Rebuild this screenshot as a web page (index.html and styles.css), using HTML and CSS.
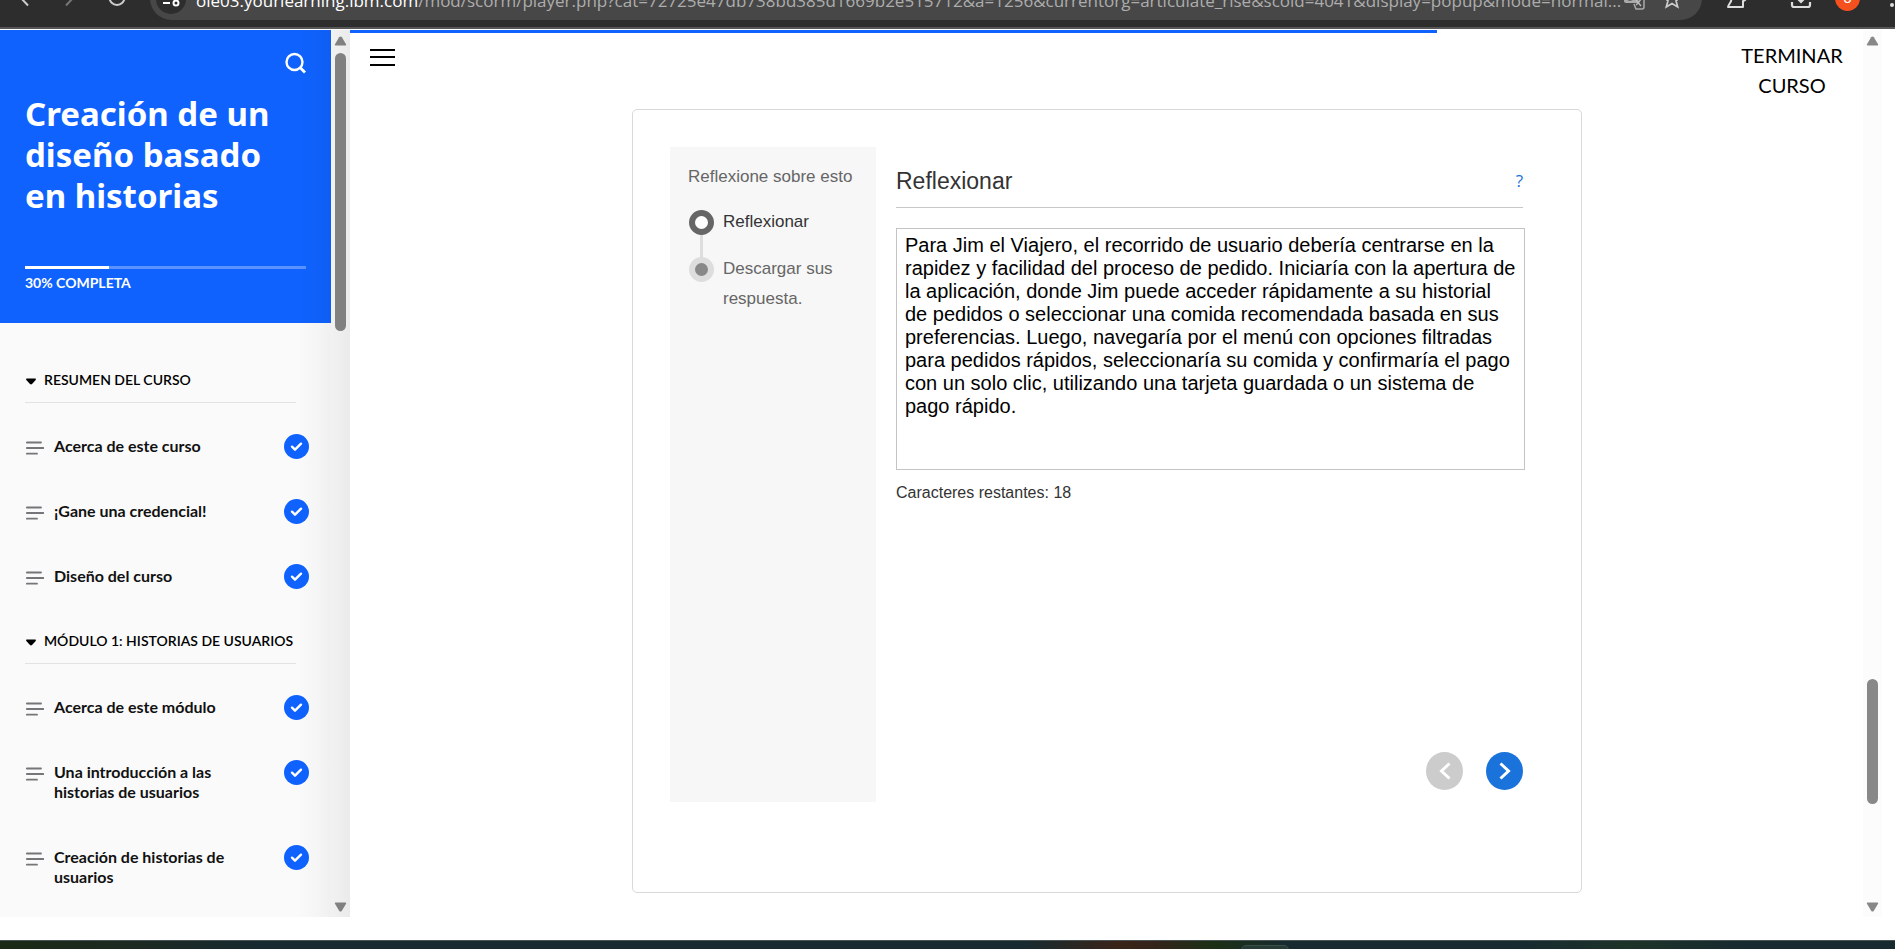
FILE: index.html
```html
<!DOCTYPE html>
<html lang="es">
<head>
<meta charset="utf-8">
<meta name="viewport" content="width=device-width, initial-scale=1">
<title>Creación de un diseño basado en historias</title>
<link rel="stylesheet" href="styles.css">
</head>
<body>
<svg class="sprite" aria-hidden="true">
  <symbol id="check" viewBox="0 0 25 25"><circle cx="12.500" cy="12.500" r="12.500" fill="#0f62fe"/><path d="M8 12.700l3 3 6-6" fill="none" stroke="#fff" stroke-width="2.400" stroke-linecap="round" stroke-linejoin="round"/></symbol>
  <symbol id="lines" viewBox="0 0 18 16"><path d="M.8 2.500H15M.8 8H17.300M.8 13.700H11" fill="none" stroke="#75757a" stroke-width="1.800" stroke-linecap="round"/></symbol>
  <symbol id="up" viewBox="0 0 13 11"><path d="M1 10.500h11q1-.3.6-1.500L8 1.500q-1.500-2-3 0L.4 9q-.4 1.200.6 1.500z" fill="#888"/></symbol>
  <symbol id="caret" viewBox="0 0 10 7"><path d="M.6.500h8.800q.8.500.3 1.500L6 6q-1 .9-2 0L.3 2Q-.2 1 .6.500z" fill="#000"/></symbol>
</svg>

<header class="toolbar">
  <nav class="toolbar-nav" aria-label="Navegación">
    <button type="button" aria-label="Atrás"><svg viewBox="0 0 24 22"><path d="M16 15.500L8 7l8-8" stroke="#ccc"/></svg></button>
    <button type="button" aria-label="Adelante"><svg viewBox="0 0 24 22"><path d="M8 15.500L16 7 8-1" stroke="#777"/></svg></button>
    <button type="button" aria-label="Recargar"><svg viewBox="0 0 24 22"><circle cx="13" cy="7.500" r="7.500" stroke="#ccc"/></svg></button>
  </nav>
  <div class="omnibox">
    <button type="button" class="site-info" aria-label="Información del sitio"><svg viewBox="0 0 18 18"><path d="M1 13h7M10 6h7" stroke="#fff" stroke-width="2"/><circle cx="14" cy="13" r="2.500" fill="none" stroke="#fff" stroke-width="2"/></svg></button>
    <span class="url"><b>ole03.yourlearning.ibm.com</b>/mod/scorm/player.php?cat=72725e47db738bd385d1669b2e515712&amp;a=1256&amp;currentorg=articulate_rise&amp;scoid=4041&amp;display=popup&amp;mode=normal...</span>
    <button type="button" class="omni-icon" aria-label="Traducir"><svg viewBox="0 0 22 22"><path d="M1 1h12l3 14H3q-2 0-2-2z" fill="#aaa"/><circle cx="7" cy="9" r="3" fill="none" stroke="#474747" stroke-width="1.500"/><path d="M14 6h5q2 0 2 2v11q0 2-2 2h-6l-2-5" fill="none" stroke="#aaa" stroke-width="1.500"/><path d="M12 10h7m-1 0q-1 4-5 7m0-5l5 6" fill="none" stroke="#bbb" stroke-width="1.400"/></svg></button>
    <button type="button" class="omni-icon" aria-label="Añadir a favoritos"><svg viewBox="0 0 22 22"><path d="M11 2l2.600 6 6.400.6-5 4.200 1.700 6.200L11 15.500 5.300 19 7 12.800 2 8.600 8.400 8z" fill="none" stroke="#ccc" stroke-width="1.700"/></svg></button>
  </div>
  <div class="toolbar-actions">
    <button type="button" aria-label="Extensiones"><svg viewBox="0 0 22 22"><path d="M5 0H3v5q4 2 1 6-2 3-2 4h15v-6q4-1 3-5h-3V0" fill="none" stroke="#ddd" stroke-width="2" stroke-linejoin="round"/></svg></button>
    <span class="divider"></span>
    <button type="button" aria-label="Descargas"><svg viewBox="0 0 22 22"><path d="M2 10v3q0 2 2 2h14q2 0 2-2v-3" fill="none" stroke="#ddd" stroke-width="2.200"/><path d="M11 0v9M6 5l5 5 5-5" fill="none" stroke="#ddd" stroke-width="2"/></svg></button>
    <button type="button" class="avatar" aria-label="Perfil">o</button>
    <button type="button" class="more" aria-label="Más"><svg viewBox="0 0 6 22"><circle cx="3" cy="13" r="2" fill="#ddd"/><circle cx="3" cy="6" r="2" fill="#ddd"/></svg></button>
  </div>
</header>

<div class="page">
  <aside class="sidebar">
    <div class="sidebar-body">
      <div class="course-head">
        <button type="button" class="search" aria-label="Buscar"><svg viewBox="0 0 22 22"><circle cx="10.500" cy="10" r="8" fill="none" stroke="#fff" stroke-width="2.400"/><path d="M16 15.500l5 5" stroke="#fff" stroke-width="2.800"/></svg></button>
        <h1>Creación de un diseño basado en historias</h1>
        <div class="course-progress"><span style="width:30%"></span></div>
        <p>30% COMPLETA</p>
      </div>
      <nav class="lessons" aria-label="Lecciones">
        <section>
          <h2><button type="button"><svg class="caret"><use href="#caret"/></svg>RESUMEN DEL CURSO</button></h2>
          <ul>
            <li><a href="#"><svg class="lines"><use href="#lines"/></svg><span>Acerca de este curso</span><svg class="check"><use href="#check"/></svg></a></li>
            <li><a href="#"><svg class="lines"><use href="#lines"/></svg><span>¡Gane una credencial!</span><svg class="check"><use href="#check"/></svg></a></li>
            <li><a href="#"><svg class="lines"><use href="#lines"/></svg><span>Diseño del curso</span><svg class="check"><use href="#check"/></svg></a></li>
          </ul>
        </section>
        <section>
          <h2><button type="button"><svg class="caret"><use href="#caret"/></svg>MÓDULO 1: HISTORIAS DE USUARIOS</button></h2>
          <ul>
            <li><a href="#"><svg class="lines"><use href="#lines"/></svg><span>Acerca de este módulo</span><svg class="check"><use href="#check"/></svg></a></li>
            <li><a href="#"><svg class="lines"><use href="#lines"/></svg><span>Una introducción a las historias de usuarios</span><svg class="check"><use href="#check"/></svg></a></li>
            <li><a href="#"><svg class="lines"><use href="#lines"/></svg><span>Creación de historias de usuarios</span><svg class="check"><use href="#check"/></svg></a></li>
          </ul>
        </section>
      </nav>
    </div>
    <div class="scrollbar side-scroll" aria-hidden="true">
      <svg><use href="#up"/></svg>
      <div class="track"><i class="thumb"></i></div>
      <svg class="down"><use href="#up"/></svg>
    </div>
  </aside>

  <main class="content">
    <div class="lesson-progress"><span style="width:71.850%"></span></div>
    <header class="lesson-head">
      <button type="button" class="menu" aria-label="Menú"><i></i><i></i><i></i></button>
      <button type="button" class="finish">TERMINAR CURSO</button>
    </header>
    <div class="stage">
      <article class="card">
        <aside class="steps">
          <h2>Reflexione sobre esto</h2>
          <ol>
            <li class="current"><i class="dot"></i><span>Reflexionar</span></li>
            <li><i class="dot"></i><span>Descargar sus respuesta.</span></li>
          </ol>
        </aside>
        <section class="reflection">
          <header><h3><label for="answer">Reflexionar</label></h3><a href="#">?</a></header>
          <textarea id="answer" spellcheck="false">Para Jim el Viajero, el recorrido de usuario debería centrarse en la rapidez y facilidad del proceso de pedido. Iniciaría con la apertura de la aplicación, donde Jim puede acceder rápidamente a su historial de pedidos o seleccionar una comida recomendada basada en sus preferencias. Luego, navegaría por el menú con opciones filtradas para pedidos rápidos, seleccionaría su comida y confirmaría el pago con un solo clic, utilizando una tarjeta guardada o un sistema de pago rápido.</textarea>
          <p>Caracteres restantes: 18</p>
          <footer>
            <button type="button" class="prev" aria-label="Anterior"><svg viewBox="0 0 12 18"><path d="M10.500 1.500L2.500 9l8 7.500"/></svg></button>
            <button type="button" class="next" aria-label="Siguiente"><svg viewBox="0 0 12 18"><path d="M1.500 1.500L9.500 9l-8 7.500"/></svg></button>
          </footer>
        </section>
      </article>
    </div>
  </main>
  <div class="scrollbar page-scroll" aria-hidden="true">
    <svg><use href="#up"/></svg>
    <div class="track"><i class="thumb"></i></div>
    <svg class="down"><use href="#up"/></svg>
  </div>
</div>

<footer class="taskbar"><span></span></footer>
</body>
</html>
```
FILE: styles.css
```css
* { box-sizing: border-box; }

body {
  display: flex;
  flex-direction: column;
  height: 100vh;
  margin: 0;
  overflow: hidden;
  background: #fff;
  color: #000;
  font-family: Lato, sans-serif;
}

h1, h2, h3, p, ul, ol { margin: 0; padding: 0; list-style: none; }
button { padding: 0; border: 0; background: none; color: inherit; font: inherit; cursor: pointer; }
a { color: inherit; text-decoration: none; }
svg { display: block; }
.sprite { position: absolute; width: 0; height: 0; }

/* Browser toolbar */
.toolbar {
  display: flex;
  flex: none;
  height: 29px;
  overflow: hidden;
  border-bottom: 2px solid #575757;
  background: #2d2d2d;
}
.toolbar-nav { display: flex; flex: none; align-items: flex-start; gap: 22px; width: 150px; padding-left: 12px; margin-top: -10px; }
.toolbar-nav svg { width: 24px; height: 22px; fill: none; stroke-width: 2; }
.omnibox {
  display: flex;
  flex: 1;
  align-items: center;
  gap: 16px;
  min-width: 0;
  height: 43px;
  margin-top: -23px;
  padding: 0 19px 0 6px;
  border-radius: 22px;
  background: #474747;
}
.site-info { display: grid; flex: none; place-items: center; width: 30px; height: 30px; border-radius: 50%; background: #2d2d2d; }
.site-info svg { width: 18px; height: 18px; }
.url { flex: 1; min-width: 0; margin: 4px 0 0 -6px; color: #adadad; font: 17px/24px "Open Sans", sans-serif; white-space: nowrap; }
.url b { color: #fff; font-weight: 400; }
.omni-icon { flex: none; }
.omni-icon svg { width: 22px; height: 22px; }
.toolbar-actions { display: flex; flex: none; align-items: flex-start; gap: 23px; width: 193px; margin-top: -8px; padding-left: 24px; }
.toolbar-actions svg { width: 22px; height: 22px; }
.toolbar-actions .divider { width: 3px; height: 17px; margin-left: -4px; background: #111; }
.toolbar-actions .avatar { flex: none; width: 25px; height: 25px; margin-top: -6px; border-radius: 50%; background: #f4511e; color: #fff; font: 15px/25px Roboto, sans-serif; }
.toolbar-actions .more { flex: none; margin-left: 6px; }
.toolbar-actions .more svg { width: 6px; }

/* Page frame */
.page { display: flex; flex: 1; min-height: 0; padding: 1px 13px 23px 0; }

.sidebar { position: relative; display: flex; flex: none; width: 350px; background: #fafafa; }
.sidebar::after {
  content: "";
  position: absolute;
  inset: 0 0 0 auto;
  width: 54px;
  background: linear-gradient(90deg, rgba(0, 0, 0, 0), rgba(0, 0, 0, .02) 40%, rgba(0, 0, 0, .07));
  pointer-events: none;
}
.sidebar-body { flex: 1; overflow: hidden; }

.course-head { display: flex; flex-direction: column; padding: 22px 25px 30px; background: #0f62fe; color: #fff; }
.search { align-self: flex-end; }
.search svg { width: 22px; height: 22px; }
.course-head h1 { margin-top: 19px; font: 700 33px/41px "Noto Sans", sans-serif; }
.course-progress { height: 3px; margin-top: 50px; background: #5a92ff; }
.course-progress span { display: block; height: 3px; background: #fff; }
.course-head p { margin-top: 4px; font-size: 14px; font-weight: 700; line-height: 20px; }

.lessons { padding: 25px 22px 0 25px; }
.lessons h2 { margin-right: 13px; border-bottom: 1px solid #e2e2e2; }
.lessons h2 button { display: flex; align-items: center; width: 100%; height: 54px; padding-top: 10px; font-size: 14px; font-weight: 600; line-height: 20px; white-space: nowrap; }
.caret { flex: none; width: 10px; height: 7px; margin: 2px 8px 0 1px; }
.lessons ul { padding-top: 11px; }
.lessons a { display: flex; align-items: flex-start; padding: 22px 0 23px; font-size: 16px; font-weight: 700; line-height: 20px; color: #111; }
.lines { flex: none; width: 18px; height: 16px; margin: 4px 10px 0 1px; }
.lessons a span { flex: 1; padding-right: 48px; }
.check { flex: none; width: 25px; height: 25px; margin: -2px 0 -3px; }

/* Scrollbars */
.scrollbar { display: flex; flex: none; flex-direction: column; align-items: center; gap: 7px; width: 19px; padding: 6px 0 5px; background: #fcfcfc; }
.scrollbar svg { flex: none; width: 13px; height: 10px; }
.scrollbar .down { transform: rotate(180deg); }
.track { display: flex; flex: 1; flex-direction: column; }
.thumb { width: 11px; border-radius: 6px; background: #888; }
.side-scroll .thumb { height: 33%; }
.page-scroll .thumb { height: 15%; min-height: 125px; margin-top: auto; }
.page-scroll .track { padding-bottom: 91px; }

/* Lesson */
.content { flex: 1; min-width: 0; overflow: hidden; }
.lesson-progress { height: 3px; }
.lesson-progress span { display: block; height: 3px; background: #0f62fe; }
.lesson-head { display: flex; align-items: flex-start; justify-content: space-between; height: 76px; padding: 7px 20px 0; }
.menu { display: flex; flex-direction: column; gap: 5px; width: 25px; margin-top: 9px; }
.menu i { width: 100%; height: 2px; background: #000; }
.menu i:nth-child(2) { margin-bottom: 1px; }
.finish { width: 102px; font-size: 20px; line-height: 30px; }

.stage { padding-left: 1px; }
.card {
  display: flex;
  gap: 20px;
  max-width: 950px;
  min-height: 784px;
  margin: 0 auto;
  padding: 37px 56px 90px 37px;
  border: 1px solid #d9d9d9;
  border-radius: 5px;
  color: #333;
  font-family: "Liberation Sans", Arial, sans-serif;
}
.steps { flex: none; width: 206px; padding: 15px 18px; background: #f7f7f7; color: #666; font-size: 17px; line-height: 30px; }
.steps h2 { font-size: 17px; font-weight: 400; white-space: nowrap; }
.steps ol { display: grid; gap: 17px; padding-top: 15px; }
.steps li { display: flex; gap: 9px; }
.steps span { flex: 1; }
.dot { position: relative; flex: none; width: 25px; height: 25px; margin: 3px 0 0 1px; border: 6px solid #ddd; border-radius: 50%; background: #888; }
.current { color: #333; }
.current .dot { border-color: #666; background: #fff; }
.current .dot::after { content: ""; position: absolute; top: 19px; left: 5px; width: 3px; height: 23px; background: #ddd; }

.reflection { display: flex; flex: 1; flex-direction: column; min-width: 0; }
.reflection header { display: flex; align-items: center; justify-content: space-between; height: 61px; margin-right: 2px; padding-top: 8px; border-bottom: 1px solid #c8c8c8; }
.reflection h3 { font-size: 23px; font-weight: 400; line-height: 30px; }
.reflection header a { color: #1a73db; font: 17px/24px "Open Sans", sans-serif; }
.reflection textarea {
  display: block;
  width: 100%;
  height: 242px;
  margin-top: 20px;
  padding: 5px 7px 4px 8px;
  border: 1px solid #c4c4c4;
  border-radius: 0;
  background: #fff;
  color: #000;
  font: 20px/23px "Liberation Sans", Arial, sans-serif;
  resize: none;
  outline: 0;
}
.reflection p { margin-top: 13px; font-size: 16px; line-height: 20px; }
.reflection footer { display: flex; justify-content: flex-end; gap: 23px; margin: auto 2px 12px 0; }
.reflection footer button { display: grid; place-items: center; width: 37px; height: 38px; border-radius: 50%; }
.reflection footer svg { width: 12px; height: 18px; fill: none; stroke: #fff; stroke-width: 3; }
.prev { background: #ccc; }
.next { background: #1a73db; }

/* Taskbar */
.taskbar {
  flex: none;
  height: 9px;
  padding: 4px 0 0 65.500%;
  overflow: hidden;
  border-top: 1px solid #4a5356;
  background: linear-gradient(90deg, #1a2a14, #1d2a22 7%, #172a30 14%, #172a30 54%, #3a2418 59%, #33241a 61%, #1c3015 64%, #172a30 68%, #172a30 80%, #1c3328 86%, #172a30 92%);
}
.taskbar span { display: block; width: 48px; height: 20px; border: 1px solid #3a5046; border-radius: 5px; background: #263b36; }
```
